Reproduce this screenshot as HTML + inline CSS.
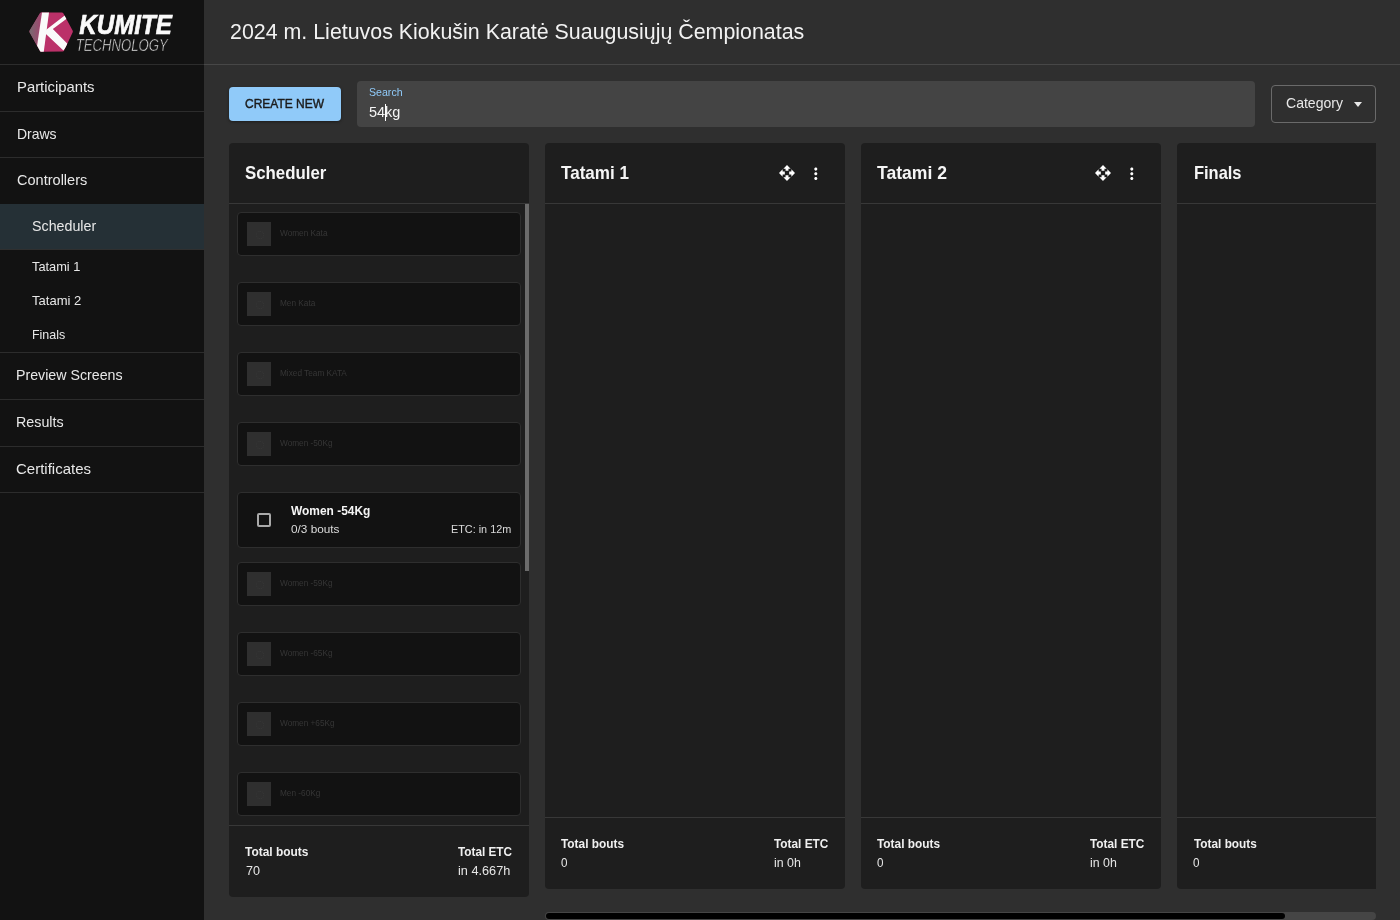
<!DOCTYPE html>
<html><head><meta charset="utf-8"><title>Kumite Technology - Scheduler</title>
<style>
*{box-sizing:border-box;margin:0;padding:0}
html,body{width:1400px;height:920px;overflow:hidden}
body{background:#2f2f2f;font-family:"Liberation Sans",sans-serif;position:relative}
.abs{position:absolute}
.txt{position:absolute;left:0;top:0;width:1400px;height:920px;will-change:transform}
.txt span{position:absolute;white-space:nowrap;line-height:1;font-family:"Liberation Sans",sans-serif;transform-origin:0 0}
#sidebar{position:absolute;left:0;top:0;width:204px;height:920px;background:#121212}
.sline{position:absolute;left:0;width:204px;height:1px;background:#2c2c2c}
#selrow{position:absolute;left:0;top:204px;width:204px;height:45px;background:#253036}
#hline{position:absolute;left:204px;top:64px;width:1196px;height:1px;background:#474747}
#btn{position:absolute;left:229px;top:87px;width:112px;height:34px;background:#90caf9;border-radius:4px;box-shadow:0 1px 3px rgba(0,0,0,.4)}
#search{position:absolute;left:357px;top:81px;width:898px;height:46px;background:#444;border-radius:4px}
#cursor{position:absolute;left:385px;top:104px;width:1px;height:17px;background:#fff}
#cat{position:absolute;left:1271px;top:85px;width:105px;height:38px;border:1px solid #6a6a6a;border-radius:4px}
#caret{position:absolute;left:1353.5px;top:102px;width:0;height:0;border-left:4.5px solid transparent;border-right:4.5px solid transparent;border-top:5px solid #e8e8e8}
.panel{position:absolute;top:143px;width:300px;background:#1e1e1e;border-radius:4px;overflow:hidden}
.phl{position:absolute;left:0;width:100%;height:1px;background:#383838;top:60px}
.pfl{position:absolute;left:0;width:100%;height:1px;background:#383838}
.item{position:absolute;left:237px;width:284px;height:44px;background:#121212;border:1px solid #2e2e2e;border-radius:4px}
.thumb{position:absolute;left:9px;top:9px;width:24px;height:24px;background:#2f2f2f}
.thumb::after{content:"";position:absolute;left:9px;top:9px;width:6px;height:6px;border:1px dotted #383838;border-radius:50%}
#vthumb{position:absolute;left:525px;top:204px;width:4px;height:367px;background:#6b6b6b}
#htrack{position:absolute;left:545px;top:912px;width:831px;height:8px;background:#454545;border-radius:4px}
#hthumb{position:absolute;left:546px;top:913px;width:739px;height:6px;background:#000;border-radius:3px}
.cb{position:absolute;left:257px;top:513px;width:14px;height:14px;border:2px solid #a9a9a9;border-radius:2px}

</style></head><body>
<div id="sidebar">
  <svg class="abs" style="left:0;top:0" width="204" height="64" viewBox="0 0 204 64">
    <defs>
      <clipPath id="hex"><path d="M41.5 12.4 L61.8 12.4 Q62.8 12.4 63.3 13.3 L72.6 30.6 Q73.1 31.5 72.6 32.4 L64.1 50.5 Q63.6 51.5 62.6 51.5 L41.5 51.8 Q40.5 51.8 40 50.9 L29.7 32.4 Q29.2 31.5 29.7 30.6 L40 13.3 Q40.5 12.4 41.5 12.4 Z"/></clipPath>
      <linearGradient id="lg" x1="0" x2="1" y1="0" y2="0">
        <stop offset="0" stop-color="#707070"/><stop offset="1" stop-color="#a8406f"/>
      </linearGradient>
    </defs>
    <g clip-path="url(#hex)">
      <rect x="28" y="11" width="46" height="42" fill="#bb3169"/>
      <polygon points="28,11 42.2,11 36,53 28,53" fill="url(#lg)"/>
      <polygon points="42.2,11 49.2,11 43.6,53 36,53" fill="#fafafa"/>
      <polygon points="46.2,29.8 66,14.6 68,17.8 52.8,29 68.2,44.4 63.4,50.6 45.4,33.4" fill="#fafafa"/>
    </g>
  </svg>
  <div class="sline" style="top:64px"></div>
  <div class="sline" style="top:111px"></div>
  <div class="sline" style="top:157px"></div>
  <div id="selrow"></div>
  <div class="sline" style="top:249px;background:#2f2f2f"></div>
  <div class="sline" style="top:352px"></div>
  <div class="sline" style="top:399px"></div>
  <div class="sline" style="top:446px"></div>
  <div class="sline" style="top:492px"></div>
</div>
<svg class="abs" style="left:0;top:0;will-change:transform" width="204" height="64">
  <text x="79.3" y="33.6" font-family="Liberation Sans" font-weight="700" font-style="italic" font-size="27.2" fill="#fafafa" stroke="#fafafa" stroke-width="0.7" textLength="92.5" lengthAdjust="spacingAndGlyphs">KUMITE</text>
  <text x="75.8" y="50.9" font-family="Liberation Sans" font-style="italic" font-size="17.2" fill="#e6e6e6" stroke="#121212" stroke-width="0.55" textLength="92" lengthAdjust="spacingAndGlyphs">TECHNOLOGY</text>
</svg>
<div id="hline"></div>
<div id="btn"></div>
<div id="search"></div>
<div id="cursor"></div>
<div id="cat"></div>
<div id="caret"></div>

<div class="panel" style="left:229px;height:754px">
  <div class="phl"></div>
  <div class="pfl" style="top:682px"></div>
</div>
<div class="panel" style="left:545px;height:746px">
  <div class="phl"></div>
  <div class="pfl" style="top:674px"></div>
</div>
<div class="panel" style="left:861px;height:746px">
  <div class="phl"></div>
  <div class="pfl" style="top:674px"></div>
</div>
<div class="panel" style="left:1177px;width:199px;height:746px;border-radius:4px 0 0 4px">
  <div class="phl"></div>
  <div class="pfl" style="top:674px"></div>
</div>

<div class="item" style="top:212px"><div class="thumb"></div></div>
<div class="item" style="top:282px"><div class="thumb"></div></div>
<div class="item" style="top:352px"><div class="thumb"></div></div>
<div class="item" style="top:422px"><div class="thumb"></div></div>
<div class="item" style="top:492px;height:56px"></div>
<div class="cb"></div>
<div class="item" style="top:562px"><div class="thumb"></div></div>
<div class="item" style="top:632px"><div class="thumb"></div></div>
<div class="item" style="top:702px"><div class="thumb"></div></div>
<div class="item" style="top:772px"><div class="thumb"></div></div>
<div id="vthumb"></div>

<svg class="abs" style="left:779px;top:165px" width="16" height="16" viewBox="1 1 22 22"><path fill="#fff" d="M10 9h4V6h3l-5-5-5 5h3v3zm-1 1H6V7l-5 5 5 5v-3h3v-4zm14 2l-5-5v3h-3v4h3v3l5-5zm-9 3h-4v3H7l5 5 5-5h-3v-3z"/></svg>
<svg class="abs" style="left:807.5px;top:165.5px" width="15.6" height="15.6" viewBox="2 2 20 20"><path fill="#fff" d="M12 8c1.1 0 2-.9 2-2s-.9-2-2-2-2 .9-2 2 .9 2 2 2zm0 2c-1.1 0-2 .9-2 2s.9 2 2 2 2-.9 2-2-.9-2-2-2zm0 6c-1.1 0-2 .9-2 2s.9 2 2 2 2-.9 2-2-.9-2-2-2z"/></svg>
<svg class="abs" style="left:1095px;top:165px" width="16" height="16" viewBox="1 1 22 22"><path fill="#fff" d="M10 9h4V6h3l-5-5-5 5h3v3zm-1 1H6V7l-5 5 5 5v-3h3v-4zm14 2l-5-5v3h-3v4h3v3l5-5zm-9 3h-4v3H7l5 5 5-5h-3v-3z"/></svg>
<svg class="abs" style="left:1123.5px;top:165.5px" width="15.6" height="15.6" viewBox="2 2 20 20"><path fill="#fff" d="M12 8c1.1 0 2-.9 2-2s-.9-2-2-2-2 .9-2 2 .9 2 2 2zm0 2c-1.1 0-2 .9-2 2s.9 2 2 2 2-.9 2-2-.9-2-2-2zm0 6c-1.1 0-2 .9-2 2s.9 2 2 2 2-.9 2-2-.9-2-2-2z"/></svg>

<div id="htrack"></div>
<div id="hthumb"></div>

<div class="txt">
<span style="left:16.80px;top:79.98px;font-size:14.2px;font-weight:400;color:#e8e8e8;font-style:normal;transform:scaleX(1.0455);">Participants</span>
<span style="left:16.70px;top:127.08px;font-size:14.2px;font-weight:400;color:#e8e8e8;font-style:normal;transform:scaleX(0.9850);">Draws</span>
<span style="left:16.70px;top:173.08px;font-size:14.2px;font-weight:400;color:#e8e8e8;font-style:normal;transform:scaleX(1.0246);">Controllers</span>
<span style="left:32.30px;top:219.15px;font-size:14.0px;font-weight:400;color:#e8e8e8;font-style:normal;transform:scaleX(1.0183);">Scheduler</span>
<span style="left:32.30px;top:261.25px;font-size:12.7px;font-weight:400;color:#e8e8e8;font-style:normal;transform:scaleX(1.0093);">Tatami 1</span>
<span style="left:32.30px;top:294.95px;font-size:12.7px;font-weight:400;color:#e8e8e8;font-style:normal;transform:scaleX(1.0281);">Tatami 2</span>
<span style="left:32.30px;top:329.05px;font-size:12.7px;font-weight:400;color:#e8e8e8;font-style:normal;transform:scaleX(0.9810);">Finals</span>
<span style="left:16.30px;top:368.08px;font-size:14.2px;font-weight:400;color:#e8e8e8;font-style:normal;transform:scaleX(1.0014);">Preview Screens</span>
<span style="left:16.30px;top:414.78px;font-size:14.2px;font-weight:400;color:#e8e8e8;font-style:normal;transform:scaleX(1.0061);">Results</span>
<span style="left:16.30px;top:461.98px;font-size:14.2px;font-weight:400;color:#e8e8e8;font-style:normal;transform:scaleX(1.0568);">Certificates</span>
<span style="left:229.70px;top:20.76px;font-size:21.9px;font-weight:400;color:#f2f2f2;font-style:normal;transform:scaleX(0.9771);">2024 m. Lietuvos Kiokušin Karatė Suaugusiųjų Čempionatas</span>
<span style="left:245.00px;top:97.96px;font-size:12.8px;font-weight:400;color:#1c1c1c;font-style:normal;-webkit-text-stroke:0.45px #1c1c1c;transform:scaleX(0.9363);">CREATE NEW</span>
<span style="left:368.90px;top:86.52px;font-size:11.2px;font-weight:400;color:#90caf9;font-style:normal;transform:scaleX(0.9477);">Search</span>
<span style="left:368.90px;top:104.30px;font-size:15px;font-weight:400;color:#f5f5f5;font-style:normal;transform:scaleX(0.9652);">54kg</span>
<span style="left:1286.00px;top:96.16px;font-size:14.1px;font-weight:400;color:#e8e8e8;font-style:normal;transform:scaleX(0.9967);">Category</span>
<span style="left:245.40px;top:164.64px;font-size:17.9px;font-weight:700;color:#f5f5f5;font-style:normal;transform:scaleX(0.9409);">Scheduler</span>
<span style="left:561.00px;top:164.64px;font-size:17.9px;font-weight:700;color:#f5f5f5;font-style:normal;transform:scaleX(0.9542);">Tatami 1</span>
<span style="left:877.40px;top:164.64px;font-size:17.9px;font-weight:700;color:#f5f5f5;font-style:normal;transform:scaleX(0.9822);">Tatami 2</span>
<span style="left:1193.60px;top:164.64px;font-size:17.9px;font-weight:700;color:#f5f5f5;font-style:normal;transform:scaleX(0.9187);">Finals</span>
<span style="left:279.80px;top:229.22px;font-size:8.6px;font-weight:400;color:#363636;font-style:normal;transform:scaleX(0.9589);">Women Kata</span>
<span style="left:279.80px;top:299.22px;font-size:8.6px;font-weight:400;color:#363636;font-style:normal;transform:scaleX(0.9587);">Men Kata</span>
<span style="left:279.80px;top:369.22px;font-size:8.6px;font-weight:400;color:#363636;font-style:normal;transform:scaleX(0.9589);">Mixed Team KATA</span>
<span style="left:279.80px;top:439.22px;font-size:8.6px;font-weight:400;color:#363636;font-style:normal;transform:scaleX(0.9589);">Women -50Kg</span>
<span style="left:279.80px;top:579.22px;font-size:8.6px;font-weight:400;color:#363636;font-style:normal;transform:scaleX(0.9589);">Women -59Kg</span>
<span style="left:279.80px;top:649.22px;font-size:8.6px;font-weight:400;color:#363636;font-style:normal;transform:scaleX(0.9589);">Women -65Kg</span>
<span style="left:279.80px;top:719.22px;font-size:8.6px;font-weight:400;color:#363636;font-style:normal;transform:scaleX(0.9588);">Women +65Kg</span>
<span style="left:279.80px;top:789.22px;font-size:8.6px;font-weight:400;color:#363636;font-style:normal;transform:scaleX(0.9588);">Men -60Kg</span>
<span style="left:290.50px;top:505.03px;font-size:12.6px;font-weight:700;color:#f5f5f5;font-style:normal;transform:scaleX(0.9469);">Women -54Kg</span>
<span style="left:290.50px;top:523.96px;font-size:10.8px;font-weight:400;color:#dcdcdc;font-style:normal;transform:scaleX(1.0918);">0/3 bouts</span>
<span style="left:450.90px;top:523.96px;font-size:10.8px;font-weight:400;color:#dcdcdc;font-style:normal;transform:scaleX(1.0033);">ETC: in 12m</span>
<span style="left:245.30px;top:845.88px;font-size:12.9px;font-weight:700;color:#f0f0f0;font-style:normal;transform:scaleX(0.9255);">Total bouts</span>
<span style="left:245.50px;top:864.88px;font-size:12.9px;font-weight:400;color:#e6e6e6;font-style:normal;transform:scaleX(0.9760);">70</span>
<span style="left:458.00px;top:845.88px;font-size:12.9px;font-weight:700;color:#f0f0f0;font-style:normal;transform:scaleX(0.9121);">Total ETC</span>
<span style="left:458.00px;top:864.88px;font-size:12.9px;font-weight:400;color:#e6e6e6;font-style:normal;transform:scaleX(0.9859);">in 4.667h</span>
<span style="left:561.30px;top:837.88px;font-size:12.9px;font-weight:700;color:#f0f0f0;font-style:normal;transform:scaleX(0.9197);">Total bouts</span>
<span style="left:560.90px;top:856.98px;font-size:12.9px;font-weight:400;color:#e6e6e6;font-style:normal;transform:scaleX(0.9063);">0</span>
<span style="left:774.30px;top:838.08px;font-size:12.9px;font-weight:700;color:#f0f0f0;font-style:normal;transform:scaleX(0.9172);">Total ETC</span>
<span style="left:774.00px;top:856.98px;font-size:12.9px;font-weight:400;color:#e6e6e6;font-style:normal;transform:scaleX(0.9587);">in 0h</span>
<span style="left:877.30px;top:837.88px;font-size:12.9px;font-weight:700;color:#f0f0f0;font-style:normal;transform:scaleX(0.9197);">Total bouts</span>
<span style="left:876.90px;top:856.98px;font-size:12.9px;font-weight:400;color:#e6e6e6;font-style:normal;transform:scaleX(0.9063);">0</span>
<span style="left:1090.30px;top:838.08px;font-size:12.9px;font-weight:700;color:#f0f0f0;font-style:normal;transform:scaleX(0.9172);">Total ETC</span>
<span style="left:1090.00px;top:856.98px;font-size:12.9px;font-weight:400;color:#e6e6e6;font-style:normal;transform:scaleX(0.9587);">in 0h</span>
<span style="left:1193.60px;top:837.88px;font-size:12.9px;font-weight:700;color:#f0f0f0;font-style:normal;transform:scaleX(0.9168);">Total bouts</span>
<span style="left:1193.20px;top:856.98px;font-size:12.9px;font-weight:400;color:#e6e6e6;font-style:normal;transform:scaleX(0.9063);">0</span>
</div>
</body></html>
